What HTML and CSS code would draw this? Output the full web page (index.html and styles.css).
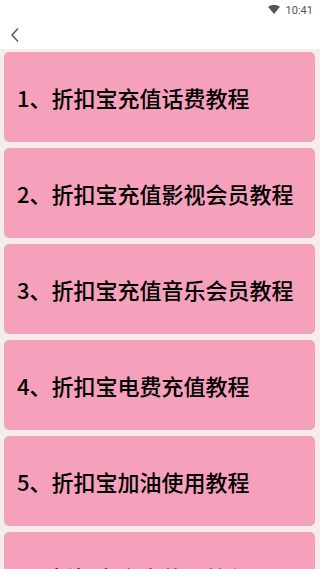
FILE: index.html
```html
<!DOCTYPE html>
<html lang="zh">
<head>
<meta charset="utf-8">
<link rel="stylesheet" href="styles.css">
</head>
<body>
<div class="status">
  <svg class="wifi" width="12" height="9" viewBox="0 0 12 9"><path d="M0 1.8 Q6 -2.2 12 1.8 L6 9 Z" fill="#555"/></svg>
  <span class="time">10:41</span>
</div>
<div class="toolbar">
  <svg class="back" width="12" height="16" viewBox="0 0 12 16"><path d="M9 1.5 L3 8 L9 14.5" fill="none" stroke="#555" stroke-width="1.4"/></svg>
</div>
<div class="list">
  <div class="card">1、折扣宝充值话费教程</div>
  <div class="card">2、折扣宝充值影视会员教程</div>
  <div class="card">3、折扣宝充值音乐会员教程</div>
  <div class="card">4、折扣宝电费充值教程</div>
  <div class="card">5、折扣宝加油使用教程</div>
  <div class="card">6、折扣宝商户使用教程</div>
</div>
</body>
</html>
```
FILE: styles.css
```css
html, body { margin: 0; padding: 0; }
body {
  width: 320px;
  height: 569px;
  overflow: hidden;
  background: #fff;
  font-family: "Noto Sans CJK SC", "Liberation Sans", sans-serif;
}
.status {
  height: 20px;
  display: flex;
  align-items: center;
  justify-content: flex-end;
  padding-right: 7px;
  gap: 6px;
}
.wifi { margin-top: -1px; }
.time {
  font-family: Roboto, "Liberation Sans", sans-serif;
  font-size: 11px;
  color: #555;
  line-height: 1;
}
.toolbar {
  height: 29px;
  display: flex;
  align-items: center;
  padding-left: 9px;
}
.back { margin-top: 0; }
.list {
  background: #f6ece9;
  padding: 3px 5px 0 4px;
  display: flex;
  flex-direction: column;
  gap: 6px;
}
.card {
  height: 90px;
  background: #f5a1bc;
  border-radius: 5px;
  display: flex;
  align-items: center;
  padding-left: 13px;
  font-size: 22px;
  font-weight: 500;
  color: #000;
  flex-shrink: 0;
}
```
